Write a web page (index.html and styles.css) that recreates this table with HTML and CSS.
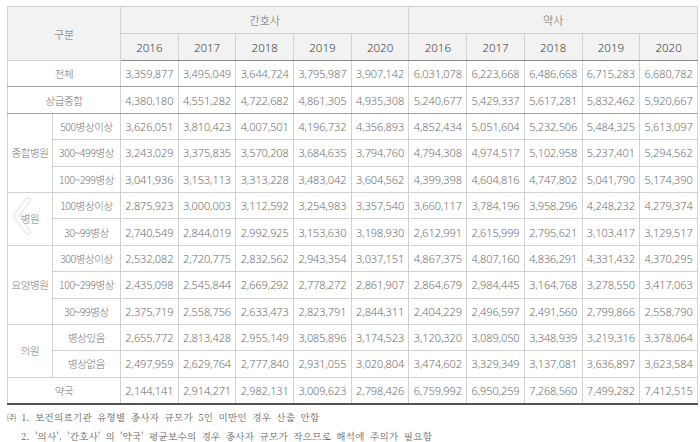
FILE: index.html
```html
<!DOCTYPE html>
<html lang="ko">
<head>
<meta charset="utf-8">
<link rel="stylesheet" href="styles.css">
</head>
<body>
<div class="wrap">
<table class="tbl">
<colgroup>
<col class="c-grp"><col class="c-sub">
<col class="c-num"><col class="c-num"><col class="c-num"><col class="c-num"><col class="c-num">
<col class="c-num"><col class="c-num"><col class="c-num"><col class="c-num"><col class="c-num">
</colgroup>
<thead>
<tr class="h1"><th colspan="2" rowspan="2" class="lbl">구분</th><th colspan="5" class="lbl">간호사</th><th colspan="5" class="lbl">약사</th></tr>
<tr class="h2"><th>2016</th><th>2017</th><th>2018</th><th>2019</th><th>2020</th><th>2016</th><th>2017</th><th>2018</th><th>2019</th><th>2020</th></tr>
</thead>
<tbody>
<tr class="sep"><td colspan="2" class="name">전체</td><td>3,359,877</td><td>3,495,049</td><td>3,644,724</td><td>3,795,987</td><td>3,907,142</td><td>6,031,078</td><td>6,223,668</td><td>6,486,668</td><td>6,715,283</td><td>6,680,782</td></tr>
<tr class="sep"><td colspan="2" class="name">상급종합</td><td>4,380,180</td><td>4,551,282</td><td>4,722,682</td><td>4,861,305</td><td>4,935,308</td><td>5,240,677</td><td>5,429,337</td><td>5,617,281</td><td>5,832,462</td><td>5,920,667</td></tr>
<tr class="grp"><td rowspan="3" class="name">종합병원</td><td class="name">500병상이상</td><td>3,626,051</td><td>3,810,423</td><td>4,007,501</td><td>4,196,732</td><td>4,356,893</td><td>4,852,434</td><td>5,051,604</td><td>5,232,506</td><td>5,484,325</td><td>5,613,097</td></tr>
<tr><td class="name">300~499병상</td><td>3,243,029</td><td>3,375,835</td><td>3,570,208</td><td>3,684,635</td><td>3,794,760</td><td>4,794,308</td><td>4,974,517</td><td>5,102,958</td><td>5,237,401</td><td>5,294,562</td></tr>
<tr><td class="name">100~299병상</td><td>3,041,936</td><td>3,153,113</td><td>3,313,228</td><td>3,483,042</td><td>3,604,562</td><td>4,399,398</td><td>4,604,816</td><td>4,747,802</td><td>5,041,790</td><td>5,174,390</td></tr>
<tr class="grp"><td rowspan="2" class="name">병원</td><td class="name">100병상이상</td><td>2,875,923</td><td>3,000,003</td><td>3,112,592</td><td>3,254,983</td><td>3,357,540</td><td>3,660,117</td><td>3,784,196</td><td>3,958,296</td><td>4,248,232</td><td>4,279,374</td></tr>
<tr><td class="name">30~99병상</td><td>2,740,549</td><td>2,844,019</td><td>2,992,925</td><td>3,153,630</td><td>3,198,930</td><td>2,612,991</td><td>2,615,999</td><td>2,795,621</td><td>3,103,417</td><td>3,129,517</td></tr>
<tr class="grp"><td rowspan="3" class="name">요양병원</td><td class="name">300병상이상</td><td>2,532,082</td><td>2,720,775</td><td>2,832,562</td><td>2,943,354</td><td>3,037,151</td><td>4,867,375</td><td>4,807,160</td><td>4,836,291</td><td>4,331,432</td><td>4,370,295</td></tr>
<tr><td class="name">100~299병상</td><td>2,435,098</td><td>2,545,844</td><td>2,669,292</td><td>2,778,272</td><td>2,861,907</td><td>2,864,679</td><td>2,984,445</td><td>3,164,768</td><td>3,278,550</td><td>3,417,063</td></tr>
<tr><td class="name">30~99병상</td><td>2,375,719</td><td>2,558,756</td><td>2,633,473</td><td>2,823,791</td><td>2,844,311</td><td>2,404,229</td><td>2,496,597</td><td>2,491,560</td><td>2,799,866</td><td>2,558,790</td></tr>
<tr class="grp"><td rowspan="2" class="name">의원</td><td class="name">병상있음</td><td>2,655,772</td><td>2,813,428</td><td>2,955,149</td><td>3,085,896</td><td>3,174,523</td><td>3,120,320</td><td>3,089,050</td><td>3,348,939</td><td>3,219,316</td><td>3,378,064</td></tr>
<tr><td class="name">병상없음</td><td>2,497,959</td><td>2,629,764</td><td>2,777,840</td><td>2,931,055</td><td>3,020,804</td><td>3,474,602</td><td>3,329,349</td><td>3,137,081</td><td>3,636,897</td><td>3,623,584</td></tr>
<tr class="grp last"><td colspan="2" class="name">약국</td><td>2,144,141</td><td>2,914,271</td><td>2,982,131</td><td>3,009,623</td><td>2,798,426</td><td>6,759,992</td><td>6,950,259</td><td>7,268,560</td><td>7,499,282</td><td>7,412,515</td></tr>
</tbody>
</table>
<div class="notes">
<p class="note"><span class="mark">㈜</span> 1. 보건의료기관 유형별 종사자 규모가 5인 미만인 경우 산출 안함</p>
<p class="note indent">2. '의사', '간호사' 의 '약국' 평균보수의 경우 종사자 규모가 작으므로 해석에 주의가 필요함</p>
</div>
<svg class="chev" width="24" height="40" viewBox="0 0 24 40" aria-hidden="true">
<path d="M18 4 L6 20 L18 36" fill="none" stroke="#cfcfcf" stroke-width="6" stroke-linecap="round" stroke-linejoin="round" opacity="0.45"/>
<path d="M18 4 L6 20 L18 36" fill="none" stroke="#ffffff" stroke-width="3.2" stroke-linecap="round" stroke-linejoin="round"/>
</svg>
</div>
</body>
</html>
```
FILE: styles.css
```css
html, body {
  margin: 0;
  padding: 0;
  background: #ffffff;
}
.wrap {
  position: relative;
  padding: 6px 3px 0 7px;
  font-family: "Noto Sans CJK KR", "Noto Sans", sans-serif;
}
.tbl {
  width: 690px;
  border-collapse: collapse;
  table-layout: fixed;
  border-top: 1px solid #a8a8a8;
  border-bottom: 2px solid #555555;
}
.c-grp { width: 45px; }
.c-sub { width: 68px; }
.c-num { width: 57.7px; }
.tbl th, .tbl td {
  font-family: "Noto Sans", "Noto Sans CJK KR", sans-serif;
  border: 1px solid #d2d2d2;
  padding: 0;
  text-align: center;
  white-space: nowrap;
  overflow: hidden;
}
.tbl th {
  background: #f2f2f2;
  height: 26px;
  font-weight: 300;
  color: #3c3c3c;
  font-size: 11.5px;
}
.tbl th.lbl {
  font-family: "Noto Sans CJK KR", sans-serif;
  color: #666666;
  font-size: 11px;
  font-weight: 300;
}
.tbl tr.h2 th {
  border-bottom: 1px solid #8a8a8a;
}
.tbl td {
  height: 25.4px;
  font-size: 11px;
  font-weight: 300;
  color: #6e6e6e;
  letter-spacing: -0.1px;
}
.tbl td.name {
  font-family: "Noto Sans CJK KR", sans-serif;
  color: #777777;
  font-size: 10.5px;
  letter-spacing: -0.4px;
}
.tbl tr.sep td {
  border-bottom: 1px solid #a0a0a0;
}
.tbl tr.grp td {
  border-top: 1px solid #a0a0a0;
}
.tbl tr.last td {
  border-top: 1px solid #6a6a6a;
}
.notes {
  margin-top: 3px;
}
.note {
  margin: 0;
  height: 19px;
  line-height: 19px;
  overflow: visible;
  font-family: "Noto Serif CJK KR", "Noto Sans CJK KR", serif;
  font-size: 9.5px;
  color: #666666;
  letter-spacing: 0.3px;
  word-spacing: 2px;
}
.mark {
  font-size: 9px;
}
.note.indent {
  padding-left: 14px;
}
.chev {
  position: absolute;
  left: 10px;
  top: 196px;
}
```
